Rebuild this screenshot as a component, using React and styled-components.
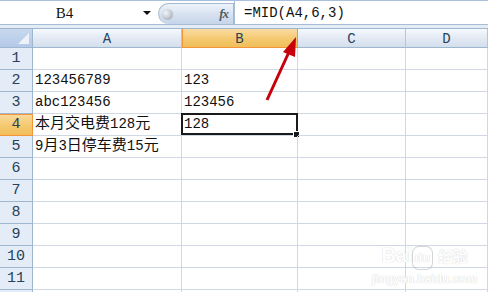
import React from 'react';
import styled, { createGlobalStyle, css } from 'styled-components';

const GlobalStyle = createGlobalStyle`
  html, body {
    margin: 0;
    padding: 0;
    background: #ffffff;
    overflow: hidden;
  }
`;

const columns = ['A', 'B', 'C', 'D'];

const rows = [
  ['', ''],
  ['123456789', '123'],
  ['abc123456', '123456'],
  ['本月交电费128元', '128'],
  ['9月3日停车费15元', ''],
  ['', ''],
  ['', ''],
  ['', ''],
  ['', ''],
  ['', ''],
  ['', ''],
  ['', ''],
];

// 한자 구간만 15px 폰트로 감싸기
const Mixed = ({ text }) => (
  <CellText>
    {text.split(/([\u4e00-\u9fff]+)/).map((part, i) =>
      /[\u4e00-\u9fff]/.test(part) ? <Han key={i}>{part}</Han> : part
    )}
  </CellText>
);

const App = () => {
  return (
    <Page>
      <GlobalStyle />
      <Toolbar>
        <FormulaRow>
          <NameBox>
            <NameText>B4</NameText>
            <DropArrow />
          </NameBox>
          <FxPill>
            <Knob />
            <FxLabel>fx</FxLabel>
          </FxPill>
          <FormulaInput>=MID(A4,6,3)</FormulaInput>
        </FormulaRow>
      </Toolbar>

      <Sheet>
        <Corner />
        {columns.map((c) => (
          <ColHead key={c} $selected={c === 'B'}>
            {c}
          </ColHead>
        ))}
        {rows.map((r, i) => (
          <React.Fragment key={i}>
            {/* 마지막 행은 3px만 보여서 번호 없음 */}
            <RowHead $selected={i === 3}>{i < 11 ? i + 1 : ''}</RowHead>
            <Cell>
              <Mixed text={r[0]} />
            </Cell>
            <Cell $active={i === 3}>
              <Mixed text={r[1]} />
            </Cell>
            <Cell />
            <Cell />
          </React.Fragment>
        ))}
      </Sheet>

      <Arrow viewBox="0 0 488 292">
        <line x1="267" y1="100" x2="289" y2="52" stroke="#c8000b" strokeWidth="3" />
        <polygon points="296,37 283,52 295,57" fill="#c8000b" />
      </Arrow>

      <Watermark>
        <WmBrand>
          Bai<WmDu>du</WmDu> <Han>经验</Han>
        </WmBrand>
        <WmUrl>jingyan.baidu.com</WmUrl>
      </Watermark>
    </Page>
  );
};

export default App;

const Page = styled.div`
  position: relative;
  width: 488px;
  height: 292px;
  overflow: hidden;
  background: #ffffff;
`;

const Han = styled.span`
  font-family: 'Noto Sans CJK SC', sans-serif;
  font-size: 15px;
`;

const CellText = styled.span`
  display: block;
  line-height: 18px;
`;

const Toolbar = styled.div`
  height: 28px;
  box-sizing: border-box;
  border-top: 1px solid #a8c0dc;
  background: #e4ecf6;
`;

const FormulaRow = styled.div`
  height: 24px;
  box-sizing: border-box;
  display: flex;
  background: #ffffff;
  border-bottom: 1px solid #a7bcd5;
`;

const NameBox = styled.div`
  width: 155px;
  display: flex;
  align-items: center;
  padding: 1px 0 0 0;
  box-sizing: border-box;
`;

const NameText = styled.div`
  flex: 1;
  text-align: center;
  padding-right: 14px;
  font-family: 'Liberation Serif', serif;
  font-size: 15px;
  color: #111;
`;

const DropArrow = styled.div`
  width: 0;
  height: 0;
  margin-right: 4px;
  border-left: 4px solid transparent;
  border-right: 4px solid transparent;
  border-top: 4px solid #111;
`;

const FxPill = styled.div`
  width: 76px;
  margin: 2px 0 0 3px;
  box-sizing: border-box;
  display: flex;
  align-items: center;
  justify-content: space-between;
  padding: 0 5px 0 3px;
  border: 1px solid #a4b8d2;
  border-bottom: none;
  border-radius: 11px 0 0 11px;
  background: linear-gradient(#eef3fa, #d3dfef 60%, #c6d5ea);
`;

const Knob = styled.div`
  width: 11px;
  height: 11px;
  border-radius: 50%;
  background: radial-gradient(circle at 35% 35%, #f4f6f9, #a9b1bc 80%);
`;

const FxLabel = styled.div`
  font-family: 'Liberation Serif', serif;
  font-style: italic;
  font-weight: bold;
  font-size: 13px;
  color: #555a60;
  letter-spacing: -1px;
`;

const FormulaInput = styled.div`
  flex: 1;
  border-left: 1px solid #a7bcd5;
  padding: 3px 0 0 9px;
  font-family: 'Liberation Mono', monospace;
  font-size: 14px;
  color: #111;
  line-height: 18px;
`;

const Sheet = styled.div`
  display: grid;
  grid-template-columns: 33px 149px 116px 108px 1fr;
  grid-template-rows: 19px repeat(12, 22px);
  border-top: 1px solid #9eb6ce;
`;

const headBase = css`
  box-sizing: border-box;
  display: flex;
  align-items: center;
  justify-content: center;
  font-family: 'Liberation Mono', monospace;
  font-size: 14px;
  color: #27425a;
`;

const selectedHead = css`
  background: linear-gradient(#f9dba3, #f4c96f 55%, #f1be5a);
`;

const Corner = styled.div`
  box-sizing: border-box;
  position: relative;
  border-right: 1px solid #9eb6ce;
  border-bottom: 1px solid #9eb6ce;
  background: linear-gradient(#c8d8ee, #b4c9e8);
  &::after {
    content: '';
    position: absolute;
    right: 3px;
    bottom: 3px;
    border-left: 11px solid transparent;
    border-bottom: 11px solid #eef3fa;
  }
`;

const ColHead = styled.div`
  ${headBase};
  padding-top: 2px;
  border-right: 1px solid #b4c6dc;
  border-bottom: 1px solid #9eb6ce;
  background: linear-gradient(#f6f9fd, #e3eaf4 50%, #d4dfec);
  ${(p) =>
    p.$selected &&
    css`
      ${selectedHead};
      border-bottom-color: #f29536;
      box-shadow: inset 1px 0 0 #f29536;
      border-right-color: #f29536;
    `}
`;

const RowHead = styled.div`
  ${headBase};
  align-items: flex-end;
  padding-bottom: 2px;
  font-size: 15px;
  border-right: 1px solid #9eb6ce;
  border-bottom: 1px solid #9eb6ce;
  background: #e4ecf7;
  ${(p) =>
    p.$selected &&
    css`
      ${selectedHead};
      border-right-color: #f29536;
      border-bottom-color: #f29536;
      box-shadow: inset 0 1px 0 #f29536;
    `}
`;

const Cell = styled.div`
  position: relative;
  box-sizing: border-box;
  display: flex;
  align-items: flex-end;
  padding: 0 2px 2px 2px;
  border-right: 1px solid #d0d7e5;
  border-bottom: 1px solid #d0d7e5;
  white-space: nowrap;
  font-family: 'Liberation Mono', 'Noto Sans CJK SC', monospace;
  font-size: 14px;
  color: #111;
  ${(p) =>
    p.$active &&
    css`
      &::before {
        content: '';
        position: absolute;
        left: -1px;
        top: -1px;
        right: -1px;
        bottom: 0;
        border: 2px solid #1a1a1a;
      }
      &::after {
        content: '';
        position: absolute;
        right: -3px;
        bottom: -3px;
        width: 5px;
        height: 5px;
        background: #1a1a1a;
        border: 1px solid #fff;
      }
    `}
`;

const Arrow = styled.svg`
  position: absolute;
  left: 0;
  top: 0;
  width: 488px;
  height: 292px;
  pointer-events: none;
`;

const Watermark = styled.div`
  position: absolute;
  left: 372px;
  top: 244px;
  display: flex;
  flex-direction: column;
  align-items: center;
  color: #ffffff;
  text-shadow: 0 0 1px rgba(120, 120, 120, 0.45);
  pointer-events: none;
`;

const WmBrand = styled.div`
  font-family: 'Liberation Sans', sans-serif;
  font-weight: bold;
  font-size: 20px;
  line-height: 22px;
`;

const WmDu = styled.span`
  display: inline-block;
  font-size: 13px;
  padding: 0 2px;
  border-radius: 6px;
  box-shadow: 0 0 0 1px rgba(150, 150, 150, 0.4);
`;

const WmUrl = styled.div`
  font-family: 'Liberation Sans', sans-serif;
  font-weight: bold;
  font-size: 12px;
  margin-top: 3px;
`;
